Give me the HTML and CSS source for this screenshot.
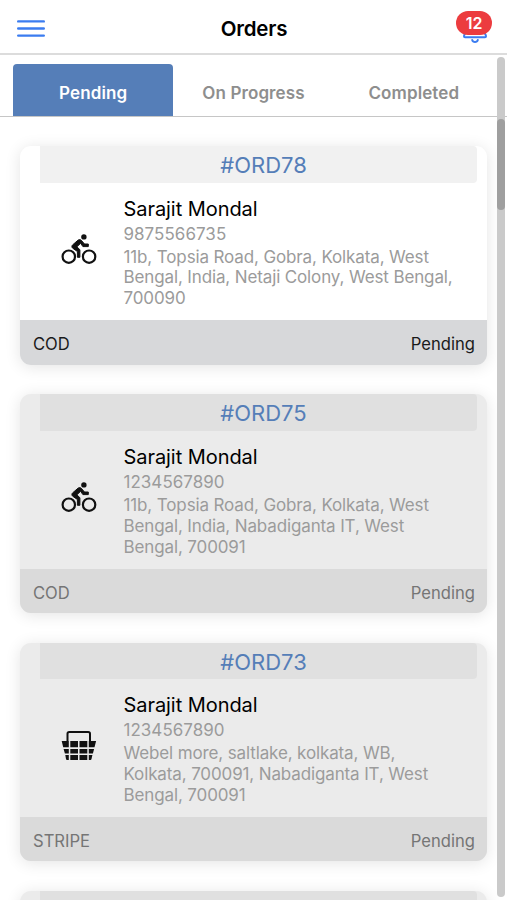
FILE: index.html
```html
<!DOCTYPE html>
<html lang="en">
<head>
<meta charset="utf-8">
<title>Orders</title>
<link rel="stylesheet" href="styles.css">
</head>
<body>
<svg class="defs" aria-hidden="true">
  <symbol id="bike" viewBox="0 0 36 32">
    <circle cx="7.8" cy="22.7" r="6.2" fill="none" stroke="currentColor" stroke-width="2.200"/>
    <circle cx="28.1" cy="22.7" r="6.2" fill="none" stroke="currentColor" stroke-width="2.200"/>
    <circle cx="22.9" cy="2.900" r="2.700"/>
    <path d="M20.200 6.200c-.9-.8-2.200-.8-3.200 0l-5.400 4.700c-1 1-.9 2.500.1 3.300l4.700 3.300v5.800h2.500v-7.600l-3-2.900 3.700-3.500 2.300 3.300h5.400V10h-3.800z" stroke="currentColor" stroke-width="1" stroke-linejoin="round"/>
  </symbol>
  <symbol id="basket" viewBox="0 0 36 32">
    <path d="M6.500 11V3.700q0-1.800 1.800-1.800h18.900q1.800 0 1.800 1.800V11" fill="none" stroke="currentColor" stroke-width="2"/>
    <path d="M.7 11h7.100v6.300H2.200zM9.300 11h7.700v6.300H9.300zM18.500 11h7.800v6.300h-7.800zM27.800 11h7.300l-1.600 6.300h-5.700zM2.600 19h5.200v4.400H3.900zM9.300 19h7.700v4.400H9.300zM18.500 19h7.800v4.400h-7.800zM27.800 19h5.300l-1.200 4.400h-4.100zM4.300 25h3.500v5H6q-.8 0-1-.9zM9.300 25h7.700v5H9.300zM18.500 25h7.800v5h-7.800zM27.800 25h3.600l-.9 4.100q-.2.9-1 .9h-1.700z"/>
  </symbol>
</svg>
<header class="topbar">
  <svg class="menu" viewBox="0 0 28 18"><path d="M1.200 1.400h25.600M1.200 8.500h25.600M1.200 15.600h25.600"/></svg>
  <h1 class="title">Orders</h1>
  <div class="bell">
    <svg class="bell-icon" viewBox="0 0 24 28"><path d="M12 2C7 2 4.500 6 4.500 11c0 6-3.500 8-3.500 10.300q0 .9 1 .9h20q1 0 1-.9c0-2.300-3.500-4.300-3.500-10.300C19.500 6 17 2 12 2zM9.200 25q.6 2 2.800 2t2.800-2"/></svg>
    <span class="badge">12</span>
  </div>
</header>
<nav class="tabs">
  <div class="tab active"><span class="tab-label">Pending</span></div>
  <div class="tab"><span class="tab-label">On Progress</span></div>
  <div class="tab"><span class="tab-label">Completed</span></div>
</nav>
<main class="orders">
  <article class="card fresh">
    <h2 class="order-id">#ORD78</h2>
    <div class="details">
      <svg class="mode"><use href="#bike"/></svg>
      <div class="customer">
        <h3 class="name">Sarajit Mondal</h3>
        <p class="phone">9875566735</p>
        <p class="address">11b, Topsia Road, Gobra, Kolkata, West<br>Bengal, India, Netaji Colony, West Bengal,<br>700090</p>
      </div>
    </div>
    <footer class="status"><span>COD</span><span>Pending</span></footer>
  </article>
  <article class="card">
    <h2 class="order-id">#ORD75</h2>
    <div class="details">
      <svg class="mode"><use href="#bike"/></svg>
      <div class="customer">
        <h3 class="name">Sarajit Mondal</h3>
        <p class="phone">1234567890</p>
        <p class="address">11b, Topsia Road, Gobra, Kolkata, West<br>Bengal, India, Nabadiganta IT, West<br>Bengal, 700091</p>
      </div>
    </div>
    <footer class="status"><span>COD</span><span>Pending</span></footer>
  </article>
  <article class="card">
    <h2 class="order-id">#ORD73</h2>
    <div class="details">
      <svg class="mode"><use href="#basket"/></svg>
      <div class="customer">
        <h3 class="name">Sarajit Mondal</h3>
        <p class="phone">1234567890</p>
        <p class="address">Webel more, saltlake, kolkata, WB,<br>Kolkata, 700091, Nabadiganta IT, West<br>Bengal, 700091</p>
      </div>
    </div>
    <footer class="status"><span>STRIPE</span><span>Pending</span></footer>
  </article>
  <article class="card peek"><div class="order-id"></div></article>
</main>
<div class="scroll-track"><div class="scroll-thumb"></div></div>
</body>
</html>
```
FILE: styles.css
```css
* { box-sizing: border-box; }
html { overflow: hidden; }
body {
  margin: 0;
  width: 507px;
  height: 900px;
  overflow: hidden;
  position: relative;
  background: #fff;
  color: #000;
  font-family: Inter, "Liberation Sans", sans-serif;
}
h1, h2, h3, p { margin: 0; font-weight: 400; }
.defs { position: absolute; width: 0; height: 0; }

.topbar {
  height: 55px;
  border-bottom: 2px solid #dcdcdc;
  display: grid;
  grid-template-columns: 60px 1fr 60px;
  align-items: center;
  padding: 4px 0 0;
}
.menu { width: 28px; height: 18px; margin-left: 17px; }
.menu path { fill: none; stroke: #3b7cf0; stroke-width: 2.400; stroke-linecap: round; }
.title { padding-left: 1px; text-align: center; font-size: 20.500px; font-weight: 600; line-height: 26px; letter-spacing: -.2px; }
.bell { position: relative; width: 24px; height: 28px; margin-left: 16px; }
.bell-icon { width: 24px; height: 28px; display: block; }
.bell-icon path { fill: none; stroke: #3b7cf0; stroke-width: 2; stroke-linecap: round; }
.badge {
  position: absolute;
  left: -7px;
  top: -4px;
  width: 36px;
  height: 24px;
  border-radius: 12px;
  background: #ec3c3f;
  color: #fff;
  font-size: 16px;
  font-weight: 600;
  line-height: 25px;
  text-align: center;
}

.tabs {
  height: 62px;
  padding: 9px 13px 0;
  border-bottom: 1px solid #c6c6c6;
  display: grid;
  grid-template-columns: repeat(3, 1fr);
}
.tab { display: flex; justify-content: center; padding-top: 18px; color: #8e8e8e; }
.tab.active { background: #557eb8; color: #fff; border-radius: 4px 4px 0 0; }
.tab-label { font-size: 17px; font-weight: 600; line-height: 22px; letter-spacing: .1px; }

.orders { height: 783px; overflow: hidden; padding: 29px 0 0 20px; display: flex; flex-direction: column; gap: 29.700px; }
.card {
  flex: none;
  width: 467px;
  height: 218.700px;
  border-radius: 11px;
  background: #ebebeb;
  display: flex;
  flex-direction: column;
  box-shadow: 0 2px 16px rgba(0, 0, 0, .11);
}
.card.fresh { background: #fff; }
.card.peek { height: 30px; border-radius: 11px 11px 0 0; }
.order-id {
  flex: none;
  height: 36.700px;
  margin: 0 10px 0 20px;
  padding-left: 10px;
  border-radius: 0 4px 4px 0;
  background: #e0e0e0;
  color: #557eb8;
  text-align: center;
  font-size: 22px;
  line-height: 39px;
}
.peek .order-id { height: 30px; }
.fresh .order-id { background: #f1f1f1; }
.details { flex: none; height: 137.700px; display: flex; padding: 13px 0 0 41px; }
.mode { flex: none; width: 36px; height: 32px; margin-top: 38px; fill: currentColor; color: #111; }
.customer { margin-left: 26.500px; white-space: nowrap; }
.name { font-size: 20px; line-height: 27px; letter-spacing: -.06px; }
.phone { font-size: 17px; line-height: 23px; color: #9b9b9b; letter-spacing: .03px; }
.address { font-size: 17px; line-height: 20.800px; margin-top: 1px; color: #9b9b9b; letter-spacing: -.13px; }
.status {
  height: 44.300px;
  display: flex;
  align-items: flex-start;
  justify-content: space-between;
  padding: 1px 12px 0 13px;
  border-radius: 0 0 11px 11px;
  background: #dadada;
  color: #757575;
  font-size: 16.600px;
  line-height: 46px;
}
.fresh .status { background: #d7d8da; color: #1a1a1a; }
.status span { height: 43px; }

.scroll-track {
  position: absolute;
  left: 497px;
  top: 57px;
  width: 8px;
  height: 840px;
  padding-top: 62px;
  border-radius: 4px;
  background: #cacaca;
}
.scroll-thumb { height: 91px; border-radius: 4px; background: #9f9f9f; }
```
